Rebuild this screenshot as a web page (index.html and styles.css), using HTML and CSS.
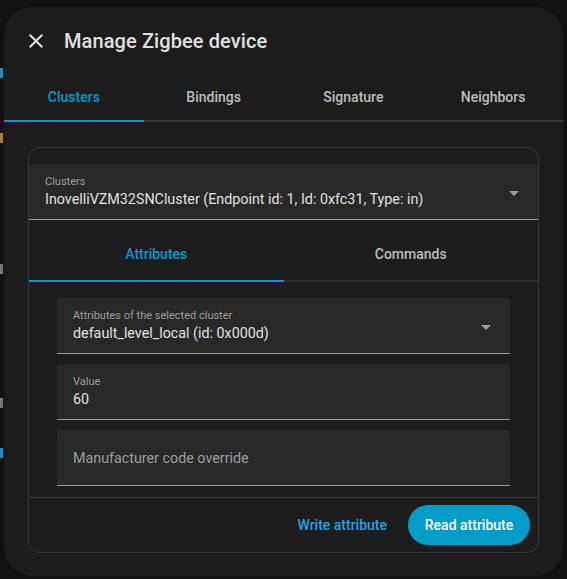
FILE: index.html
```html
<!DOCTYPE html>
<html>
<head>
<meta charset="utf-8">
<link rel="stylesheet" href="styles.css">
</head>
<body>
<div class="backdrop">
  <span class="bg-frag f1"></span>
  <span class="bg-frag f2"></span>
  <span class="bg-frag f3"></span>
  <span class="bg-frag f4"></span>
  <span class="bg-frag f5"></span>
</div>
<div class="dialog">
  <div class="header">
    <span class="close">
      <svg viewBox="0 0 24 24" width="24" height="24"><path d="M19,6.41L17.59,5L12,10.59L6.41,5L5,6.41L10.59,12L5,17.59L6.41,19L12,13.41L17.59,19L19,17.59L13.41,12L19,6.41Z" fill="#e1e1e1"/></svg>
    </span>
    <span class="title">Manage Zigbee device</span>
  </div>
  <div class="tabs">
    <div class="tab active">Clusters</div>
    <div class="tab">Bindings</div>
    <div class="tab">Signature</div>
    <div class="tab">Neighbors</div>
  </div>
  <div class="card">
    <div class="field select">
      <div class="label">Clusters</div>
      <div class="value">InovelliVZM32SNCluster (Endpoint id: 1, Id: 0xfc31, Type: in)</div>
      <span class="arrow"></span>
    </div>
    <div class="subtabs">
      <div class="subtab active">Attributes</div>
      <div class="subtab">Commands</div>
    </div>
    <div class="content">
      <div class="field select">
        <div class="label">Attributes of the selected cluster</div>
        <div class="value">default_level_local (id: 0x000d)</div>
        <span class="arrow"></span>
      </div>
      <div class="field">
        <div class="label">Value</div>
        <div class="value">60</div>
      </div>
      <div class="field placeholder">
        <div class="ph">Manufacturer code override</div>
      </div>
    </div>
    <div class="actions">
      <span class="btn text">Write attribute</span>
      <span class="btn filled">Read attribute</span>
    </div>
  </div>
</div>
</body>
</html>
```
FILE: styles.css
```css
html, body {
  margin: 0;
  padding: 0;
}
body {
  background: #111111;
  font-family: Roboto, "Noto Sans", sans-serif;
  width: 567px;
  height: 579px;
  overflow: hidden;
  position: relative;
}
.backdrop {
  position: absolute;
  left: 0;
  top: 0;
  width: 567px;
  height: 579px;
}
.bg-frag {
  position: absolute;
  left: 0;
  width: 3px;
  height: 10px;
  background: #1e8fc0;
}
.f1 { top: 68px; }
.f2 { top: 133px; background: #b07e36; }
.f3 { top: 264px; background: #777; }
.f4 { top: 398px; background: #777; }
.f5 { top: 448px; }

.dialog {
  position: relative;
  margin: 7px 0 0 4px;
  width: 559px;
  height: 569px;
  background: #1c1c1c;
  border-radius: 28px;
  box-sizing: border-box;
  display: flex;
  flex-direction: column;
  overflow: hidden;
}
.header {
  height: 63px;
  display: flex;
  align-items: center;
  padding: 4px 0 0 20px;
  box-sizing: border-box;
}
.close {
  width: 24px;
  height: 24px;
  display: block;
}
.close svg { display: block; }
.title {
  margin-left: 16px;
  font-size: 20px;
  font-weight: 500;
  color: #e1e1e1;
  letter-spacing: 0.1px;
  margin-top: 1px;
}
.tabs {
  display: flex;
}
.tab {
  flex: 1;
  height: 47px;
  border-bottom: 2px solid #363636;
  display: flex;
  align-items: center;
  justify-content: center;
  font-size: 14px;
  font-weight: 500;
  color: #bdbdbd;
  padding-top: 3px;
  box-sizing: content-box;
}
.tab.active {
  color: #039bd1;
  border-bottom-color: #039bd1;
}
.card {
  margin: 25px 24px 0 24px;
  border: 1px solid #383838;
  border-radius: 12px;
  padding-top: 16px;
  display: flex;
  flex-direction: column;
  height: 406px;
  box-sizing: border-box;
  overflow: hidden;
}
.field {
  position: relative;
  background: #282828;
  border-radius: 4px 4px 0 0;
  border-bottom: 1px solid #9a9a9a;
  height: 56px;
  box-sizing: border-box;
  padding: 11px 16px 0 16px;
  flex-shrink: 0;
}
.label {
  font-size: 11px;
  color: #9e9e9e;
  line-height: 13px;
  height: 13px;
}
.value {
  font-size: 14.3px;
  color: #e1e1e1;
  line-height: 20px;
  margin-top: 1px;
}
.arrow {
  position: absolute;
  right: 19px;
  top: 27px;
  width: 0;
  height: 0;
  border-left: 5px solid transparent;
  border-right: 5px solid transparent;
  border-top: 5px solid #9e9e9e;
}
.placeholder {
  display: flex;
  align-items: center;
  padding-top: 0;
}
.ph {
  font-size: 14.3px;
  color: #9e9e9e;
}
.subtabs {
  display: flex;
}
.subtab {
  flex: 1;
  height: 53px;
  padding-top: 7px;
  border-bottom: 2px solid #2e2e2e;
  display: flex;
  align-items: center;
  justify-content: center;
  font-size: 14px;
  font-weight: 500;
  color: #bdbdbd;
  box-sizing: content-box;
}
.subtab.active {
  color: #039bd1;
  border-bottom-color: #039bd1;
}
.content {
  height: 215px;
  overflow: hidden;
  padding: 16px 28px 0 28px;
  display: flex;
  flex-direction: column;
  gap: 10px;
  box-sizing: border-box;
  flex-shrink: 0;
}
.actions {
  border-top: 1px solid #383838;
  height: 56px;
  box-sizing: border-box;
  display: flex;
  align-items: center;
  justify-content: flex-end;
  padding: 0 8px;
  gap: 9px;
}
.btn {
  font-size: 14px;
  font-weight: 500;
  height: 40px;
  display: flex;
  align-items: center;
  border-radius: 20px;
  padding: 0 16px;
  box-sizing: border-box;
}
.btn.text {
  color: #26a6e6;
  padding: 0 12px;
}
.btn.filled {
  background: #039bc8;
  color: #ffffff;
  width: 122px;
  justify-content: center;
}
```
